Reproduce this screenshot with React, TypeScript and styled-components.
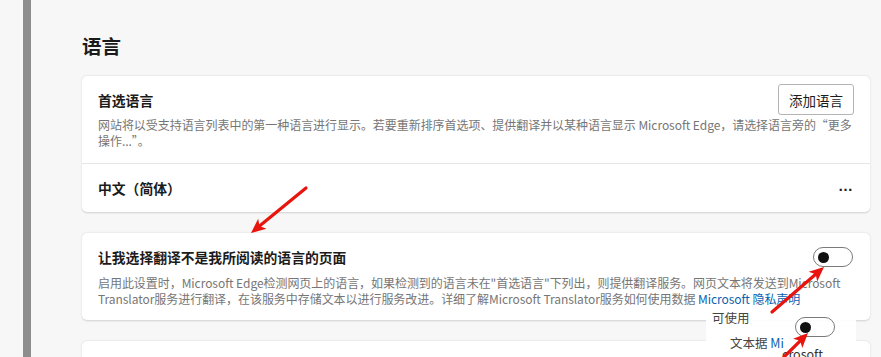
import React from 'react';
import styled, { createGlobalStyle } from 'styled-components';

const GlobalStyle = createGlobalStyle`
  html, body {
    margin: 0;
    padding: 0;
    background: #f7f7f7;
    font-family: "Noto Sans CJK SC", "Noto Sans", "Liberation Sans", sans-serif;
    color: #1b1b1b;
  }
`;

function Toggle(): React.ReactElement {
  return (
    <ToggleTrack>
      <ToggleKnob />
    </ToggleTrack>
  );
}

function Arrow({ x1, y1, x2, y2 }: { x1: number; y1: number; x2: number; y2: number }): React.ReactElement {
  const angle = Math.atan2(y2 - y1, x2 - x1);
  const len = 16;
  const spread = 0.42;
  const ax = x2 - len * Math.cos(angle - spread);
  const ay = y2 - len * Math.sin(angle - spread);
  const bx = x2 - len * Math.cos(angle + spread);
  const by = y2 - len * Math.sin(angle + spread);
  const mx = x2 - 11 * Math.cos(angle);
  const my = y2 - 11 * Math.sin(angle);
  return (
    <g>
      <line x1={x1} y1={y1} x2={mx} y2={my} stroke="#e8140e" strokeWidth={3.2} strokeLinecap="round" />
      <polygon points={`${x2},${y2} ${ax},${ay} ${mx},${my} ${bx},${by}`} fill="#e8140e" />
    </g>
  );
}

function App(): React.ReactElement {
  return (
    <Page>
      <GlobalStyle />
      <SideBar />
      <Main>
        <Heading>语言</Heading>
        <Card>
          <Section>
            <HeaderRow>
              <Title>首选语言</Title>
              <Button>添加语言</Button>
            </HeaderRow>
            <Desc $top={2}>
              网站将以受支持语言列表中的第一种语言进行显示。若要重新排序首选项、提供翻译并以某种语言显示 Microsoft Edge，请选择语言旁的“更多操作...”。
            </Desc>
          </Section>
          <LangRow>
            <Title>中文（简体）</Title>
            <More>…</More>
          </LangRow>
        </Card>
        <Card>
          <ToggleSection>
            <HeaderRow>
              <Title>让我选择翻译不是我所阅读的语言的页面</Title>
              <Toggle />
            </HeaderRow>
            <Desc $top={8}>
              启用此设置时，Microsoft Edge检测网页上的语言，如果检测到的语言未在"首选语言"下列出，则提供翻译服务。网页文本将发送到Microsoft Translator服务进行翻译，在该服务中存储文本以进行服务改进。详细了解Microsoft Translator服务如何使用数据 <Link>Microsoft 隐私声明</Link>
            </Desc>
          </ToggleSection>
        </Card>
        <Card $tall />
      </Main>

      <Fragment>
        <FragText $top={1} $left={6}>可使用</FragText>
        <FragToggle>
          <Toggle />
        </FragToggle>
        <FragText $top={26} $left={24}>文本据 <Link>Mi</Link></FragText>
        <FragText $top={37} $left={76}><Link $dark>crosoft</Link></FragText>
      </Fragment>

      <Annotations width="881" height="357" viewBox="0 0 881 357">
        <Arrow x1={306} y1={188} x2={251} y2={233} />
        <Arrow x1={772} y1={312} x2={824} y2={267} />
        <Arrow x1={784} y1={357} x2={808} y2={333} />
      </Annotations>
    </Page>
  );
}

const Page = styled.div`
  position: relative;
  width: 881px;
  height: 357px;
  overflow: hidden;
  display: flex;
  background: #f7f7f7;
`;

const SideBar = styled.div`
  width: 8px;
  margin-left: 23px;
  background: #8e8e8e;
  flex-shrink: 0;
`;

const Main = styled.div`
  flex: 1;
  padding: 31px 11px 0 51px;
  display: flex;
  flex-direction: column;
  gap: 21px;
`;

const Heading = styled.div`
  font-size: 19.5px;
  font-weight: 700;
  line-height: 30px;
  height: 30px;
  margin-bottom: -6px;
`;

const Card = styled.div<{ $tall?: boolean }>`
  background: #ffffff;
  border-radius: 5px;
  box-shadow: 0 0.5px 2px rgba(0, 0, 0, 0.16);
  flex-shrink: 0;
  min-height: ${(p) => (p.$tall ? '60px' : '0')};
`;

const Section = styled.div`
  padding: 8px 16px 14px 16px;
  border-bottom: 1px solid #e6e6e6;
`;

const ToggleSection = styled.div`
  padding: 14px 16px 13px 16px;
`;

const HeaderRow = styled.div`
  display: flex;
  align-items: center;
  justify-content: space-between;
`;

const Title = styled.div`
  font-size: 13.8px;
  font-weight: 600;
  line-height: 20px;
  color: #1b1b1b;
`;

const Button = styled.button`
  font-family: inherit;
  font-size: 13.5px;
  color: #1b1b1b;
  background: #ffffff;
  border: 1px solid #b4b4b4;
  border-radius: 3px;
  height: 31px;
  width: 76px;
  padding: 0;
`;

const Desc = styled.div<{ $top: number }>`
  font-size: 12px;
  line-height: 16px;
  letter-spacing: -0.05px;
  color: #767676;
  margin-top: ${(p) => p.$top}px;
`;

const LangRow = styled.div`
  display: flex;
  align-items: center;
  justify-content: space-between;
  height: 48px;
  padding: 0 16px;
`;

const More = styled.div`
  font-family: "Liberation Sans", sans-serif;
  font-size: 15px;
  font-weight: 700;
  line-height: 14px;
  color: #1b1b1b;
  padding-right: 1px;
  margin-top: -4px;
`;

const ToggleTrack = styled.div`
  width: 34px;
  height: 18px;
  border: 1px solid #7a7a7a;
  border-radius: 10px;
  display: flex;
  align-items: center;
  padding-left: 4px;
  box-sizing: content-box;
  margin-right: 1px;
`;

const ToggleKnob = styled.div`
  width: 11px;
  height: 11px;
  border-radius: 50%;
  background: #111111;
`;

const Link = styled.span<{ $dark?: boolean }>`
  color: ${(p) => (p.$dark ? '#333333' : '#0b5fb0')};
`;

const Fragment = styled.div`
  position: absolute;
  left: 706px;
  top: 309px;
  width: 150px;
  height: 48px;
  background: rgba(255, 255, 255, 0.92);
`;

const FragText = styled.div<{ $top: number; $left: number }>`
  position: absolute;
  top: ${(p) => p.$top}px;
  left: ${(p) => p.$left}px;
  font-size: 12.5px;
  line-height: 15px;
  color: #444444;
  white-space: nowrap;
`;

const FragToggle = styled.div`
  position: absolute;
  left: 89px;
  top: 8px;
`;

const Annotations = styled.svg`
  position: absolute;
  left: 0;
  top: 0;
  pointer-events: none;
`;

export default App;
